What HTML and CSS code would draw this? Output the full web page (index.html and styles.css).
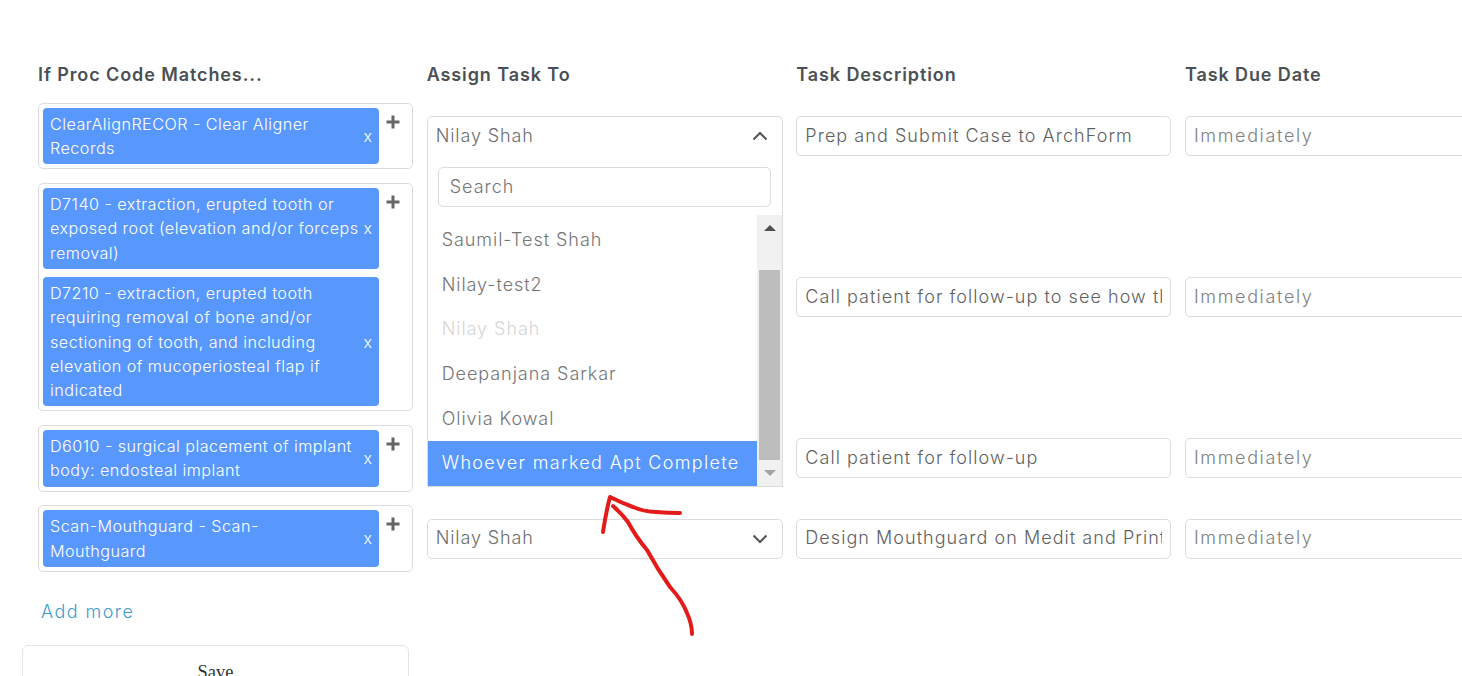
FILE: index.html
```html
<!DOCTYPE html>
<html lang="en">
<head>
    <meta charset="UTF-8">
    <meta name="viewport" content="width=device-width, initial-scale=1.0">
    <title>Task Rules</title>
    <link rel="stylesheet" href="styles.css">
</head>
<body>
  <div class="rules">
    <h2>If Proc Code Matches...</h2>
    <h2>Assign Task To</h2>
    <h2>Task Description</h2>
    <h2>Task Due Date</h2>

    <!-- row 1 -->
    <div class="codes">
      <div class="tags">
        <div class="tag"><span>ClearAlignRECOR - Clear Aligner Records</span><b>x</b></div>
      </div>
      <svg class="plus" width="14" height="14" viewBox="0 0 14 14"><path d="M5.5 0.5h3v5h5v3h-5v5h-3v-5h-5v-3h5z"/></svg>
    </div>
    <div class="assign">
      <div class="select open">
        <span>Nilay Shah</span>
        <svg width="16" height="10" viewBox="0 0 16 10"><path d="M1.5 8.5L8 2l6.5 6.5"/></svg>
      </div>
      <div class="menu">
        <div class="search"><input type="text" placeholder="Search"></div>
        <div class="options">
          <ul>
            <li>Saumil-Test Shah</li>
            <li>Nilay-test2</li>
            <li class="disabled">Nilay Shah</li>
            <li>Deepanjana Sarkar</li>
            <li>Olivia Kowal</li>
            <li class="active">Whoever marked Apt Complete</li>
          </ul>
          <div class="scrollbar">
            <i class="up"></i>
            <div class="thumb"></div>
            <i class="down"></i>
          </div>
        </div>
      </div>
    </div>
    <input class="field" type="text" value="Prep and Submit Case to ArchForm">
    <input class="field due" type="text" value="Immediately">

    <!-- row 2 -->
    <div class="codes">
      <div class="tags">
        <div class="tag"><span>D7140 - extraction, erupted tooth or exposed root (elevation and/or forceps removal)</span><b>x</b></div>
        <div class="tag"><span>D7210 - extraction, erupted tooth requiring removal of bone and/or sectioning of tooth, and including elevation of mucoperiosteal flap if indicated</span><b>x</b></div>
      </div>
      <svg class="plus" width="14" height="14" viewBox="0 0 14 14"><path d="M5.5 0.5h3v5h5v3h-5v5h-3v-5h-5v-3h5z"/></svg>
    </div>
    <div class="assign"></div>
    <input class="field" type="text" value="Call patient for follow-up to see how things are going">
    <input class="field due" type="text" value="Immediately">

    <!-- row 3 -->
    <div class="codes">
      <div class="tags">
        <div class="tag"><span>D6010 - surgical placement of implant body: endosteal implant</span><b>x</b></div>
      </div>
      <svg class="plus" width="14" height="14" viewBox="0 0 14 14"><path d="M5.5 0.5h3v5h5v3h-5v5h-3v-5h-5v-3h5z"/></svg>
    </div>
    <div class="assign"></div>
    <input class="field" type="text" value="Call patient for follow-up">
    <input class="field due" type="text" value="Immediately">

    <!-- row 4 -->
    <div class="codes">
      <div class="tags">
        <div class="tag"><span>Scan-Mouthguard - Scan-<br>Mouthguard</span><b>x</b></div>
      </div>
      <svg class="plus" width="14" height="14" viewBox="0 0 14 14"><path d="M5.5 0.5h3v5h5v3h-5v5h-3v-5h-5v-3h5z"/></svg>
    </div>
    <div class="assign">
      <div class="select">
        <span>Nilay Shah</span>
        <svg width="16" height="10" viewBox="0 0 16 10"><path d="M1.5 1.5L8 8l6.5-6.5"/></svg>
      </div>
    </div>
    <input class="field" type="text" value="Design Mouthguard on Medit and Print">
    <input class="field due" type="text" value="Immediately">
  </div>

  <a class="add-more" href="#">Add more</a>
  <div class="save"><button type="button">Save</button></div>

  <svg class="scribble" width="1462" height="676" viewBox="0 0 1462 676">
    <path d="M603 532Q606 512 610 497Q622 503 633 507Q645 512 656 512Q668 513 680 513"/>
    <path d="M613 506Q622 514 628 522Q636 537 647 550Q658 570 670 587Q682 600 687 613Q692 624 692 634"/>
  </svg>
</body>
</html>
```

FILE: styles.css
```css
*{
  margin: 0;
  padding: 0;
  box-sizing: border-box;
}

html, body{
  height: 100%;
  overflow: hidden;
}

body{
  background-color: white;
  font-family: Inter, "Open Sans", sans-serif;
  font-size: 18px;
  color: #6d6d6d;
}

.rules{
  display: grid;
  grid-template-columns: 375px 356px 375px 375px;
  column-gap: 13.67px;
  row-gap: 13.6px;
  align-items: center;
  width: 100%;
  overflow: hidden;
  padding: 63.3px 0 0 38px;
}

h2{
  font-size: 18px;
  font-weight: 600;
  line-height: 24px;
  letter-spacing: 0.9px;
  color: #4b5054;
  margin-bottom: 2px;
}

.codes{
  display: flex;
  align-items: flex-start;
  border: 1px solid #dcdcdc;
  border-radius: 5px;
  padding: 4px;
}

.tags{
  display: flex;
  flex-direction: column;
  gap: 8px;
  width: 336px;
}

.tag{
  display: flex;
  align-items: center;
  background-color: #5897fb;
  border-radius: 4px;
  padding: 4px 7px 4px 7px;
  color: white;
  font-size: 16.2px;
  font-weight: 300;
  line-height: 24.3px;
  letter-spacing: 0.45px;
}

.tag span{
  flex: 1;
  padding-right: 2px;
}

.tag b{
  font-weight: 300;
  font-size: 16px;
  letter-spacing: 0;
}

.plus{
  margin: 7px 0 0 7px;
  fill: #666;
}

.assign{
  position: relative;
  height: 40px;
}

.select{
  display: flex;
  justify-content: space-between;
  align-items: center;
  height: 40px;
  padding: 0 14px 2px 8px;
  border: 1px solid #dcdcdc;
  border-radius: 5px;
  background-color: white;
  font-weight: 300;
  letter-spacing: 0.9px;
}

.select.open{
  border-radius: 5px 5px 0 0;
}

.select svg{
  fill: none;
  stroke: #555;
  stroke-width: 2;
  margin-top: 2px;
}

.menu{
  position: absolute;
  top: 39px;
  left: 0;
  width: 100%;
  background-color: white;
  border: 1px solid #dcdcdc;
  border-top: none;
}

.search{
  padding: 12px 11px 8px 10px;
}

.search input{
  display: block;
  width: 100%;
  height: 40px;
  padding: 0 11px 2px;
  border: 1px solid #dcdcdc;
  border-radius: 5px;
  font-family: inherit;
  font-size: 18px;
  font-weight: 300;
  letter-spacing: 1px;
  outline: none;
}

.search input::placeholder{
  color: #757575;
}

.options{
  display: flex;
  height: 271px;
}

.options ul{
  flex: 1;
  list-style: none;
  padding-top: 3px;
}

.options li{
  height: 44.6px;
  line-height: 44.6px;
  padding-left: 14px;
  font-weight: 300;
  letter-spacing: 0.95px;
  color: #757575;
}

.options li.disabled{
  color: #d6d6d6;
}

.options li.active{
  background-color: #5897fb;
  color: white;
  letter-spacing: 1.33px;
}

.scrollbar{
  position: relative;
  width: 25px;
  background-color: #f1f1f1;
}

.thumb{
  position: absolute;
  top: 55px;
  left: 2px;
  width: 21px;
  height: 190px;
  background-color: #bdbdbd;
}

.up, .down{
  position: absolute;
  left: 7px;
  width: 0;
  height: 0;
  border-left: 6px solid transparent;
  border-right: 6px solid transparent;
}

.up{
  top: 10px;
  border-bottom: 6px solid #505050;
}

.down{
  bottom: 10px;
  border-top: 6px solid #a3a3a3;
}

.field{
  height: 40px;
  padding: 0 8px 2px;
  border: 1px solid #dcdcdc;
  border-radius: 5px;
  font-family: inherit;
  font-size: 18px;
  font-weight: 300;
  letter-spacing: 1.05px;
  color: #5f5f5f;
  outline: none;
}

.field.due{
  letter-spacing: 1.65px;
  color: #808080;
}

.add-more{
  display: block;
  width: max-content;
  margin: 28px 0 0 41px;
  color: #3d9bd1;
  font-size: 18px;
  font-weight: 300;
  line-height: 24px;
  letter-spacing: 1.45px;
  text-decoration: none;
}

.save{
  width: 387px;
  height: 60px;
  margin: 21px 0 0 22px;
  border: 1px solid #e5e5e5;
  border-radius: 6px;
  text-align: center;
  padding-top: 15px;
}

.save button{
  border: none;
  background: none;
  font-family: "Liberation Serif", serif;
  font-size: 18.5px;
  color: #333;
}

/* red annotation drawn over the screenshot */
.scribble{
  position: absolute;
  top: 0;
  left: 0;
  pointer-events: none;
}

.scribble path{
  fill: none;
  stroke: #e31b1b;
  stroke-width: 4;
  stroke-linecap: round;
  stroke-linejoin: round;
}
```
